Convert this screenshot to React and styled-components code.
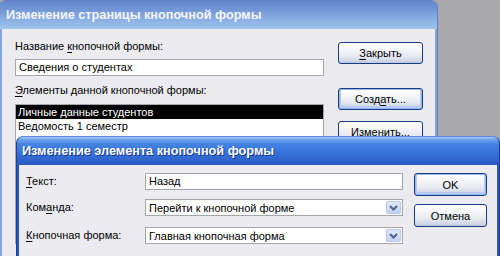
import React from 'react';
import styled, { createGlobalStyle, css } from 'styled-components';

const Global = createGlobalStyle`
  html, body {
    margin: 0;
    padding: 0;
    width: 500px;
    height: 256px;
    overflow: hidden;
    background: #a8a7ab;
    font-family: 'Liberation Sans', Arial, sans-serif;
    font-size: 11px;
    color: #000;
  }
`;

const Desktop = styled.div`
  position: relative;
  width: 500px;
  height: 256px;
  overflow: hidden;
  background: #a8a7ab;
`;

// окна лежат на "рабочем столе", поэтому их место задаётся координатами
const Window = styled.div`
  position: absolute;
  left: ${(p) => p.left}px;
  top: ${(p) => p.top}px;
  width: ${(p) => p.width}px;
  height: ${(p) => p.height}px;
  display: flex;
  flex-direction: column;
  border-radius: 7px 7px 0 0;
  box-sizing: border-box;
  overflow: hidden;
  ${(p) =>
    p.active
      ? css`
          background: #2a56c0;
          border: 1px solid #1e3f95;
          border-top-color: #5a8be0;
        `
      : css`
          background: #86a6e2;
          border: 1px solid #5f7fc6;
        `}
`;

const TitleBar = styled.div`
  height: 28px;
  flex: none;
  display: flex;
  align-items: center;
  padding-left: ${(p) => p.indent}px;
  font-family: 'Liberation Sans', Arial, sans-serif;
  font-weight: bold;
  font-size: 12.7px;
  color: #fff;
  ${(p) =>
    p.active
      ? css`
          background: linear-gradient(#a9cdf5 0, #72a6ee 8%, #4583e2 25%, #3873d8 55%, #2f63cc 85%, #2856bd 100%);
          text-shadow: 1px 1px 0 #14338a;
        `
      : css`
          background: linear-gradient(#6285cc 0, #7396d6 30%, #89aee3 65%, #a2c6ee 100%);
          color: #f4f7fd;
        `}
`;

const Client = styled.div`
  flex: 1;
  margin: 0 2px;
  background: #ecebf0;
  display: flex;
  padding: ${(p) => p.pad};
  gap: ${(p) => p.gap}px;
`;

const Column = styled.div`
  display: flex;
  flex-direction: column;
  width: ${(p) => p.width}px;
`;

const Label = styled.div`
  line-height: 13px;
  height: 13px;
  margin-top: ${(p) => p.mt || 0}px;
  white-space: nowrap;
`;

const U = styled.span`
  text-decoration: underline;
  text-underline-offset: 2px;
`;

const TextBox = styled.div`
  box-sizing: border-box;
  height: 17px;
  margin-top: ${(p) => p.mt || 0}px;
  background: #fff;
  border: 1px solid #a5a6ab;
  padding: 0 3px;
  line-height: 15px;
  white-space: nowrap;
  overflow: hidden;
`;

const ListBox = styled.div`
  box-sizing: border-box;
  height: 140px;
  margin-top: ${(p) => p.mt || 0}px;
  background: #fff;
  border: 1px solid #a5a6ab;
`;

const ListItem = styled.div`
  height: 14px;
  line-height: 14px;
  padding-left: 2px;
  white-space: nowrap;
  background: ${(p) => (p.selected ? '#000' : 'transparent')};
  color: ${(p) => (p.selected ? '#fff' : '#000')};
`;

const Button = styled.div`
  box-sizing: border-box;
  width: ${(p) => p.width}px;
  height: ${(p) => p.height}px;
  margin-top: ${(p) => p.mt || 0}px;
  border: 1px solid #173b85;
  border-radius: 3px;
  background: linear-gradient(#ffffff 0, #f6f7fa 30%, #e7eaf2 65%, #cfd6e6 90%, #bcc5dc 100%);
  display: flex;
  align-items: center;
  justify-content: center;
  white-space: nowrap;
  ${(p) =>
    p.isDefault &&
    css`
      box-shadow: inset 0 0 0 1px #98b6ec, inset 0 -1px 0 2px #b6cbf2;
    `}
`;

const FormGrid = styled.div`
  display: grid;
  grid-template-columns: 119px 258px;
  grid-template-rows: 17px 17px 17px;
  row-gap: 9px;
  align-items: center;
  & > :nth-child(n + 5) {
    margin-top: 4px;
  }
`;

const Combo = styled.div`
  box-sizing: border-box;
  height: 17px;
  background: #fff;
  border: 1px solid #a5a6ab;
  display: flex;
  align-items: center;
  padding-left: 3px;
  white-space: nowrap;
`;

const ComboText = styled.span`
  flex: 1;
  overflow: hidden;
`;

const DropButton = styled.div`
  width: 15px;
  height: 13px;
  margin-right: 1px;
  box-sizing: border-box;
  border: 1px solid #b8c9ee;
  border-radius: 1px;
  background: linear-gradient(#dfe8fb, #c3d3f4);
  display: flex;
  align-items: center;
  justify-content: center;
`;

const Chevron = () => (
  <svg width="9" height="6" viewBox="0 0 9 6">
    <path d="M1 1 L4.5 4.5 L8 1" fill="none" stroke="#4d6189" strokeWidth="2" />
  </svg>
);

export default function App() {
  return (
    <Desktop>
      <Global />
      <Window left={-1} top={0} width={439} height={300}>
        <TitleBar indent={6}>Изменение страницы кнопочной формы</TitleBar>
        <Client pad="11px 0 0 13px" gap={14}>
          <Column width={309}>
            <Label>
              Название <U>к</U>нопочной формы:
            </Label>
            <TextBox mt={6}>Сведения о студентах</TextBox>
            <Label mt={8}>
              <U>Э</U>лементы данной кнопочной формы:
            </Label>
            <ListBox mt={7}>
              <ListItem selected>Личные данные студентов</ListItem>
              <ListItem>Ведомость 1 семестр</ListItem>
            </ListBox>
          </Column>
          <Column width={85}>
            <Button width={85} height={22} mt={2}>
              <span>
                <U>З</U>акрыть
              </span>
            </Button>
            <Button width={85} height={22} mt={24} isDefault>
              <span>
                Созд<U>а</U>ть...
              </span>
            </Button>
            <Button width={85} height={22} mt={11}>
              <span>
                <U>И</U>зменить...
              </span>
            </Button>
          </Column>
        </Client>
      </Window>

      <Window left={16} top={136} width={484} height={140} active>
        <TitleBar indent={5} active>
          Изменение элемента кнопочной формы
        </TitleBar>
        <Client pad="8px 0 0 7px" gap={11}>
          <FormGrid>
            <Label>
              <U>Т</U>екст:
            </Label>
            <TextBox>Назад</TextBox>
            <Label>
              Ком<U>а</U>нда:
            </Label>
            <Combo>
              <ComboText>Перейти к кнопочной форме</ComboText>
              <DropButton>
                <Chevron />
              </DropButton>
            </Combo>
            <Label>
              <U>К</U>нопочная форма:
            </Label>
            <Combo>
              <ComboText>Главная кнопочная форма</ComboText>
              <DropButton>
                <Chevron />
              </DropButton>
            </Combo>
          </FormGrid>
          <Column width={73}>
            <Button width={73} height={23} isDefault>
              OK
            </Button>
            <Button width={73} height={23} mt={8}>
              Отмена
            </Button>
          </Column>
        </Client>
      </Window>
    </Desktop>
  );
}
